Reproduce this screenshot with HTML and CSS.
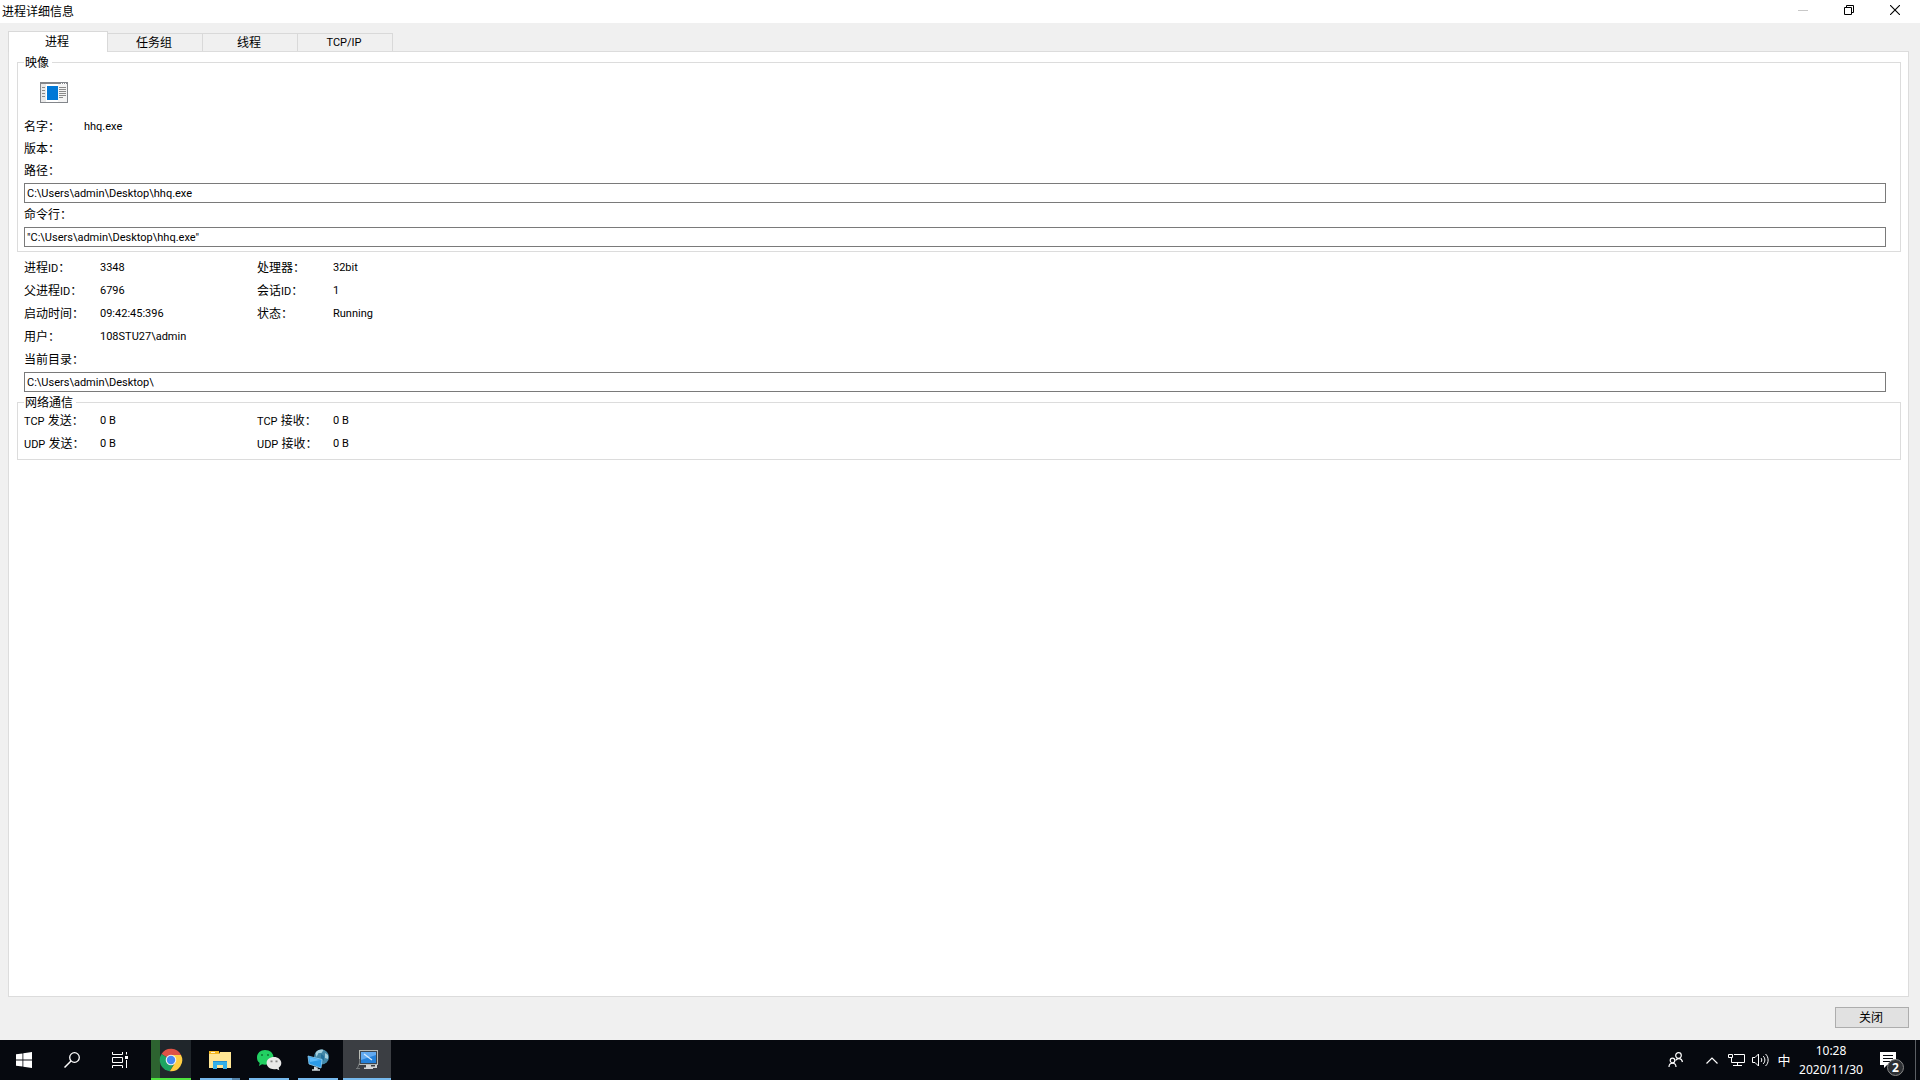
FILE: index.html
```html
<!DOCTYPE html>
<html lang="zh-CN">
<head>
    <meta charset="UTF-8">
    <meta name="viewport" content="width=device-width, initial-scale=1.0">
    <title>进程详细信息</title>
    <link rel="stylesheet" href="styles.css">
</head>
<body>
    <header class="titlebar">
        <h1>进程详细信息</h1>
        <div class="window-controls">
            <button class="win-btn" aria-label="最小化" disabled>
                <svg width="10" height="10" viewBox="0 0 10 10"><path d="M0 5.5h10" stroke="#c8c8c8" fill="none"/></svg>
            </button>
            <button class="win-btn" aria-label="还原">
                <svg width="10" height="10" viewBox="0 0 10 10"><path d="M.5 2.500h7v7h-7zM2.500 2.500v-2h7v7h-2" stroke="#000" fill="none"/></svg>
            </button>
            <button class="win-btn" aria-label="关闭窗口">
                <svg width="10" height="10" viewBox="0 0 10 10"><path d="M0 0l10 10M10 0L0 10" stroke="#000" stroke-width="1.1" fill="none"/></svg>
            </button>
        </div>
    </header>

    <main class="dialog">
        <div class="tabs" role="tablist">
            <button class="tab active" role="tab" aria-selected="true">进程</button>
            <button class="tab" role="tab">任务组</button>
            <button class="tab" role="tab">线程</button>
            <button class="tab latin" role="tab">TCP/IP</button>
        </div>

        <div class="panel" role="tabpanel">
            <!-- 映像 -->
            <fieldset class="group">
                <legend>映像</legend>
                <svg class="exe-icon" width="28" height="21" viewBox="0 0 28 21">
                    <path fill="#83868b" d="M0 0h28v21H0z"/>
                    <path fill="#fff" d="M1 2h26v18H1z"/>
                    <path fill="#e9e9e9" d="M1 2h5v18H1z"/>
                    <path fill="#f4f4f4" d="M18 2h9v18h-9z"/>
                    <path fill="#0078d7" d="M7 4h11v14H7z"/>
                    <path stroke="#8a8a8a" fill="none" d="M2 5.500h3M2 8.500h3M2 11.500h3M2 14.500h3M19 5.500h7M19 7.500h7M19 9.500h7M19 11.500h7M19 13.500h7M19 15.500h4"/>
                    <path fill="#fff" d="M21 1h1v1h-1zM23 1h1v1h-1zM25 1h1v1h-1z"/>
                </svg>
                <dl class="info name-info">
                    <dt>名字：</dt><dd>hhq.exe</dd>
                    <dt>版本：</dt><dd></dd>
                </dl>
                <label class="field-label" for="path">路径：</label>
                <input class="field" id="path" type="text" value="C:\Users\admin\Desktop\hhq.exe" readonly>
                <label class="field-label" for="cmdline">命令行：</label>
                <input class="field" id="cmdline" type="text" value="&quot;C:\Users\admin\Desktop\hhq.exe&quot;" readonly>
            </fieldset>

            <section class="details">
                <dl class="info">
                    <dt>进程<span class="latin">ID</span>：</dt><dd>3348</dd>
                    <dt>处理器：</dt><dd>32bit</dd>
                    <dt>父进程<span class="latin">ID</span>：</dt><dd>6796</dd>
                    <dt>会话<span class="latin">ID</span>：</dt><dd>1</dd>
                    <dt>启动时间：</dt><dd>09:42:45:396</dd>
                    <dt>状态：</dt><dd>Running</dd>
                    <dt>用户：</dt><dd>108STU27\admin</dd>
                </dl>
                <label class="field-label" for="cwd">当前目录：</label>
                <input class="field" id="cwd" type="text" value="C:\Users\admin\Desktop\" readonly>
            </section>

            <!-- 网络通信 -->
            <fieldset class="group">
                <legend>网络通信</legend>
                <dl class="info">
                    <dt><span class="latin">TCP</span> 发送：</dt><dd>0 B</dd>
                    <dt><span class="latin">TCP</span> 接收：</dt><dd>0 B</dd>
                    <dt><span class="latin">UDP</span> 发送：</dt><dd>0 B</dd>
                    <dt><span class="latin">UDP</span> 接收：</dt><dd>0 B</dd>
                </dl>
            </fieldset>
        </div>

        <div class="dialog-footer">
            <button class="close-btn">关闭</button>
        </div>
    </main>

    <footer class="taskbar">
        <button class="task-btn" aria-label="开始">
            <svg width="16" height="16" viewBox="0 0 16 16"><path fill="#fff" d="M0 2.300l6.500-.9v6.100H0zM7.300 1.300L16 0v7.500H7.300zM0 8.400h6.500v6.200L0 13.700zM7.300 8.400H16V16l-8.700-1.200z"/></svg>
        </button>
        <button class="task-btn" aria-label="搜索">
            <svg width="16" height="16" viewBox="0 0 16 16"><circle cx="10.500" cy="5.500" r="4.800" fill="none" stroke="#fff" stroke-width="1.300"/><path d="M7 9L.5 15.500" stroke="#fff" stroke-width="1.500"/></svg>
        </button>
        <button class="task-btn" aria-label="任务视图">
            <svg width="17" height="16" viewBox="0 0 17 16"><path d="M.5 0v2.500h10V0M.5 16v-2.500h10V16M.5 5.500h10v5H.5zM14.500 0v2.500M14.500 8v8" fill="none" stroke="#fff"/><path fill="#fff" d="M13 4h3v3h-3z"/></svg>
        </button>

        <div class="apps">
            <button class="app chrome" aria-label="Chrome">
                <svg width="24" height="24" viewBox="0 0 24 24">
                    <path fill="#de5246" d="M12 12L2.500 6A11.200 11.200 0 0 1 22 7z"/>
                    <path fill="#1da462" d="M12 12l-9.500-6a11.200 11.200 0 0 0 8.300 17.200l5-8.600z"/>
                    <path fill="#ffce44" d="M12 7h10a11.200 11.200 0 0 1-11.200 16.200l5.600-9z"/>
                    <circle cx="12" cy="12" r="5.300" fill="#f1f1f1"/>
                    <circle cx="12" cy="12" r="4.200" fill="#4587f4"/>
                </svg>
            </button>
            <button class="app explorer" aria-label="文件资源管理器">
                <svg width="24" height="24" viewBox="0 0 24 24">
                    <path fill="#f5b921" d="M1 3h10v6H1z"/>
                    <path fill="#ffe694" d="M1 6h10l1-2h11v16H1z"/>
                    <path fill="#fff6d2" d="M3 4h4v1H3z"/>
                    <path fill="#33b1e8" d="M5 13h14v8h-4v-4H9v4H5z"/>
                    <path fill="#2590cf" d="M5 13h14v1H5z"/>
                </svg>
            </button>
            <button class="app" aria-label="微信">
                <svg width="26" height="24" viewBox="0 0 26 24">
                    <path fill="#22d062" d="M9 2c5 0 8.500 3.100 8.500 7.300s-3.500 7.400-8.500 7.400c-1 0-2-.1-3-.4L3 18l.7-3C1.500 13.700 1 11.500 1 9.300 1 5.100 4.500 2 9 2z"/>
                    <path fill="#e9e9e9" d="M18 9c4 0 7.300 2.700 7.300 6 0 2-1 3.600-2.600 4.700l.6 2.500-2.800-1.300c-.8.2-1.600.3-2.500.3-4.100 0-7.400-2.700-7.400-6.200S13.900 9 18 9z"/>
                    <path fill="#128c3e" d="M5 6h2v2H5zM11 6h2v2h-2z"/>
                    <path fill="#858585" d="M14.500 12.500h2v1.700h-2zM19.500 12.500h2v1.700h-2z"/>
                </svg>
            </button>
            <button class="app" aria-label="远程网络">
                <svg width="24" height="24" viewBox="0 0 24 24">
                    <circle cx="15.500" cy="9" r="7.500" fill="#4388a8"/>
                    <path fill="#a4d0df" d="M9.500 5c2-3.500 6-4 8-3l-2 3-3 0-2 4zM19 5l3 2v4l-3-1z"/>
                    <path fill="#22709c" d="M15 6l3 2v5l-3-3z"/>
                    <path fill="#2c9be8" stroke="#8fd0f5" stroke-width=".8" d="M2 8l14 3.500-1 8.500L3 16z"/>
                    <path fill="#5fbcfa" d="M3 9l11 3-10 2z"/>
                    <path fill="#cfd9de" d="M8 18.500l4 1.200-.5 1.500h2.500v1.500H6v-1.500h2z"/>
                </svg>
            </button>
            <button class="app current" aria-label="进程详细信息">
                <svg width="24" height="24" viewBox="0 0 24 24">
                    <path fill="#b9bbb5" d="M4 2h19v15H4z"/>
                    <path fill="#3c4650" d="M5 3h17v13H5z"/>
                    <path fill="#2480d8" d="M6 4h15v11H6z"/>
                    <path fill="#62aaf0" d="M6 4h15v3L6 12z"/>
                    <path stroke="#d5eafb" stroke-width="1.300" d="M9 6l8 6"/>
                    <path fill="#d2d4d4" d="M11 17h5v1.500h4V17h2v3h-4v1h-9v-1.500h2z"/>
                    <path fill="none" stroke="#74787a" d="M4.500 11v4l-2 5M1 20.500h4"/>
                </svg>
            </button>
        </div>

        <div class="tray">
            <button class="tray-btn people" aria-label="人脉">
                <svg width="16" height="16" viewBox="0 0 16 16" fill="none" stroke="#fff" stroke-width="1.200"><circle cx="10.500" cy="3.500" r="2.800"/><path d="M7.500 8.500c1.500-2.500 6-3 7 1.500"/><circle cx="4.500" cy="8.500" r="2.300"/><path d="M1 15c0-5 7-5 7 0"/></svg>
            </button>
            <button class="tray-btn" aria-label="显示隐藏的图标">
                <svg width="12" height="7" viewBox="0 0 12 7"><path d="M.5 6.500L6 1l5.500 5.500" fill="none" stroke="#fff" stroke-width="1.200"/></svg>
            </button>
            <button class="tray-btn" aria-label="网络">
                <svg width="17" height="14" viewBox="0 0 17 14" fill="none" stroke="#fff"><path d="M6 1.500h10.500v8H3.500V5M9.500 9.500v3M5 12.500h9M.5 1.500h4v3h-4z"/></svg>
            </button>
            <button class="tray-btn" aria-label="音量">
                <svg width="17" height="14" viewBox="0 0 17 14" fill="none" stroke="#fff"><path d="M.5 4.500h2.500L6.500 1v12L3 9.500H.5zM9 5c1 1 1 3 0 4M11 3c2.500 2 2.500 6 0 8M13.500 1c3.500 3 3.500 9 0 12"/></svg>
            </button>
            <button class="tray-btn ime" aria-label="输入法">中</button>
            <button class="clock"><time>10:28</time><time>2020/11/30</time></button>
            <button class="notify" aria-label="通知">
                <svg width="16" height="16" viewBox="0 0 16 16"><path fill="#fff" d="M0 0h16v13H7l-3 3v-3H0z"/><path stroke="#06090f" d="M3 3.500h10M3 6.500h10M3 9.500h7"/></svg>
                <span class="badge">2</span>
            </button>
            <button class="show-desktop" aria-label="显示桌面"></button>
        </div>
    </footer>
</body>
</html>
```
FILE: styles.css
```css
* {
    margin: 0;
    padding: 0;
    box-sizing: border-box;
}

body {
    display: flex;
    flex-direction: column;
    min-height: 100vh;
    background: #f0f0f0;
    color: #000;
    font-family: 'Noto Sans', 'Noto Sans CJK SC', sans-serif;
    font-size: 12px;
    line-height: 14px;
}

button {
    border: none;
    background: none;
    color: inherit;
    font: inherit;
}

svg {
    display: block;
    flex: none;
}

.latin,
.info dd,
.field {
    font-family: Roboto, 'Noto Sans CJK SC', sans-serif;
    font-size: 11px;
}

/* 标题栏 */
.titlebar {
    display: flex;
    justify-content: space-between;
    height: 23px;
    padding: 0 2px;
    background: #fff;
}

.titlebar h1 {
    font-size: 12px;
    font-weight: normal;
    line-height: 23px;
}

.window-controls {
    display: flex;
}

.win-btn {
    display: flex;
    justify-content: center;
    width: 46px;
    padding-top: 5px;
}

/* 对话框 */
.dialog {
    display: flex;
    flex-direction: column;
    flex: 1;
    padding: 8px 11px 12px 8px;
}

.tabs {
    display: flex;
    align-items: flex-end;
    height: 20px;
}

.tab {
    width: 95px;
    height: 18px;
    padding-right: 2px;
    border: 1px solid #d9d9d9;
    border-width: 1px 1px 0 0;
}

.tab.active {
    position: relative;
    width: 100px;
    height: 21px;
    margin-bottom: -1px;
    border-left-width: 1px;
    background: #fff;
}

.panel {
    flex: 1;
    padding: 3px 7px 8px 8px;
    border: 1px solid #dcdcdc;
    background: #fff;
}

.group {
    min-width: 0;
    padding: 0 14px 4px 6px;
    border: 1px solid #dcdcdc;
}

.group legend {
    padding: 2px 3px 0 1px;
    line-height: 12px;
}

.exe-icon {
    margin: 13px 16px 12px;
}

.details {
    margin: 4px 15px 3px 7px;
}

.info {
    display: grid;
    grid-template-columns: 76px 157px 76px 1fr;
    grid-auto-rows: 23px;
    line-height: 24px;
}

.name-info {
    grid-template-columns: 60px 1fr;
    grid-auto-rows: 22px;
}

.field-label {
    display: block;
    line-height: 24px;
}

.field {
    display: block;
    width: 100%;
    height: 20px;
    padding: 0 2px;
    border: 1px solid #7a7a7a;
    background: #fff;
    color: #000;
    outline: none;
}

.dialog-footer {
    display: flex;
    justify-content: flex-end;
    padding-top: 10px;
}

.close-btn {
    width: 74px;
    height: 21px;
    padding-right: 2px;
    border: 1px solid #adadad;
    background: #e1e1e1;
}

/* 任务栏 */
.taskbar {
    display: flex;
    height: 40px;
    background: #06090f;
    color: #fff;
}

.task-btn {
    display: flex;
    align-items: center;
    justify-content: center;
    width: 48px;
}

.apps {
    display: flex;
    gap: 9px;
    padding-left: 7px;
}

.app {
    display: flex;
    align-items: center;
    justify-content: center;
    width: 40px;
    padding-top: 2px;
    border-bottom: 2px solid #76b9ed;
}

.app.chrome {
    border-bottom-color: #4fe33f;
    background: linear-gradient(to right, #2d6330 9px, #20262b 9px);
}

.app.explorer {
    border-image: linear-gradient(to right, #76b9ed 78%, #5484ab 78%) 2;
}

.app.current {
    width: 48px;
    margin-left: -4px;
    background: #3b3e43;
}

.tray {
    display: flex;
    align-items: center;
    margin-left: auto;
}

.tray-btn {
    display: flex;
    align-items: center;
    justify-content: center;
    width: 24px;
    height: 40px;
}

.tray-btn.people {
    width: 48px;
}

.ime {
    font-size: 13px;
}

.clock {
    width: 70px;
}

.clock time {
    display: block;
    line-height: 19px;
}

.notify {
    position: relative;
    display: flex;
    align-items: center;
    justify-content: center;
    width: 44px;
    height: 40px;
}

.badge {
    position: absolute;
    top: 19px;
    right: 6px;
    width: 17px;
    height: 17px;
    border: 1px solid #888;
    border-radius: 50%;
    background: #2d3034;
    font-weight: bold;
    line-height: 15px;
}

.show-desktop {
    width: 10px;
    height: 40px;
    background: linear-gradient(to right, transparent 5px, #5a5e63 5px, #5a5e63 6px, transparent 6px);
}
```
